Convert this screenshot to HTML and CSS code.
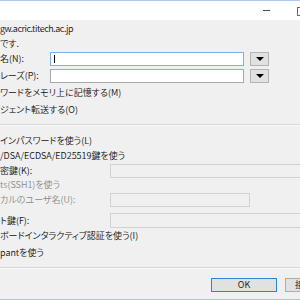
FILE: index.html
```html
<!DOCTYPE html>
<html lang="ja">
<head>
<meta charset="utf-8">
<title>SSH認証</title>
<link rel="stylesheet" href="styles.css">
</head>
<body>
<div class="window">
  <div class="titlebar">
    <span class="min"></span>
    <span class="max"></span>
  </div>
  <div class="content">
    <div class="line r1 latin">gw.acric.titech.ac.jp</div>
    <div class="line r2">です.</div>
    <div class="field r3">
      <span>名(N):</span>
      <span class="edit focus"><span class="caret"></span></span>
      <span class="drop"><span class="tri"></span></span>
    </div>
    <div class="field r4">
      <span>レーズ(P):</span>
      <span class="edit"></span>
      <span class="drop"><span class="tri"></span></span>
    </div>
    <div class="line r5">ワードをメモリ上に記憶する(M)</div>
    <div class="line r6">ジェント転送する(O)</div>
    <div class="sep s1"></div>
    <div class="line r7">インパスワードを使う(L)</div>
    <div class="line r8">/DSA/ECDSA/ED25519鍵を使う</div>
    <div class="sub r9"><span>密鍵(K):</span><span class="box"></span></div>
    <div class="line gray r10">ts(SSH1)を使う</div>
    <div class="sub r11"><span class="gray">カルのユーザ名(U):</span><span class="box short"></span></div>
    <div class="sub r12"><span>ト鍵(F):</span><span class="box tall"></span></div>
    <div class="line r13">ボードインタラクティブ認証を使う(I)</div>
    <div class="line r14">pantを使う</div>
    <div class="sep s2"></div>
    <div class="buttons">
      <span class="btn ok">OK</span>
      <span class="btn cancel">接続断(D)</span>
    </div>
  </div>
</div>
</body>
</html>
```
FILE: styles.css
```css
html, body {
  margin: 0;
  padding: 0;
  width: 300px;
  height: 300px;
  overflow: hidden;
  background: #f0f0f0;
}
.window {
  width: 300px;
  height: 300px;
  display: flex;
  flex-direction: column;
  background: #f0f0f0;
  border-bottom: 1px solid #9fc7ef;
  box-sizing: border-box;
  font-family: "Noto Sans CJK JP", sans-serif;
  font-size: 9px;
  font-weight: 350;
  font-feature-settings: "palt";
  color: #111;
  overflow: hidden;
}
.titlebar {
  height: 20px;
  flex: none;
  box-sizing: border-box;
  background: #fff;
  border-top: 1px solid #a9cdf1;
  position: relative;
}
.min {
  position: absolute;
  left: 263px;
  top: 9px;
  width: 7px;
  height: 1px;
  background: #4a4a4a;
}
.max {
  position: absolute;
  left: 297px;
  top: 6px;
  width: 8px;
  height: 7px;
  border: 1px solid #6a6a6a;
}
.content {
  display: flex;
  flex-direction: column;
  white-space: nowrap;
}
.line {
  height: 14px;
  line-height: 14px;
}
.latin { letter-spacing: -0.45px; }
.gray { color: #8a8a8a; }
.r1 { margin-top: 2px; }
.r2 { margin-top: 1px; }
.field {
  display: grid;
  grid-template-columns: 44px 194px 19px;
  column-gap: 6px;
  height: 14px;
  line-height: 14px;
  align-items: center;
}
.r3 { margin-top: 1px; }
.r4 { margin-top: 3px; }
.edit {
  height: 14px;
  box-sizing: border-box;
  background: #fff;
  border: 1px solid #a8a8a8;
  display: flex;
  align-items: center;
}
.edit.focus { border-color: #7fb3e6; }
.caret {
  margin-left: 3px;
  width: 1px;
  height: 8px;
  background: #000;
}
.drop {
  height: 14px;
  box-sizing: border-box;
  background: #e1e1e1;
  border: 1px solid #b4b4b4;
  display: flex;
  align-items: center;
  justify-content: center;
}
.tri {
  width: 0;
  height: 0;
  border-left: 4px solid transparent;
  border-right: 4px solid transparent;
  border-top: 4px solid #000;
}
.r5 { margin-top: 3px; }
.r6 { margin-top: 3px; }
.sep {
  height: 1px;
  background: #d7d7d7;
  border-bottom: 1px solid #fbfbfb;
}
.s1 { margin-top: 7px; }
.r7 { margin-top: 8px; }
.r8 { margin-top: 1px; }
.sub {
  display: grid;
  grid-template-columns: 110px 1fr;
  height: 14px;
  line-height: 14px;
  align-items: center;
}
.r9 { margin-top: 1px; }
.box {
  height: 14px;
  width: 200px;
  box-sizing: border-box;
  border: 1px solid #d2d2d2;
  background: #f0f0f0;
}
.box.short { width: 140px; }
.box.tall { height: 15px; }
.r10 { margin-top: 0; height: 14px; }
.r11 { margin-top: 1px; }
.r12 { margin-top: 6px; height: 15px; }
.r13 { margin-top: 1px; }
.r14 { margin-top: 3px; }
.s2 { margin-top: 7px; }
.buttons {
  margin-top: 9px;
  display: flex;
  padding-left: 211px;
  column-gap: 8px;
}
.btn {
  flex: none;
  height: 14px;
  box-sizing: border-box;
  line-height: 12px;
  background: #e1e1e1;
  border: 1px solid #adadad;
  text-align: center;
}
.ok {
  width: 66px;
  border-color: #2a84d8;
}
.cancel {
  width: 66px;
  text-align: left;
  padding-left: 9px;
}
```
